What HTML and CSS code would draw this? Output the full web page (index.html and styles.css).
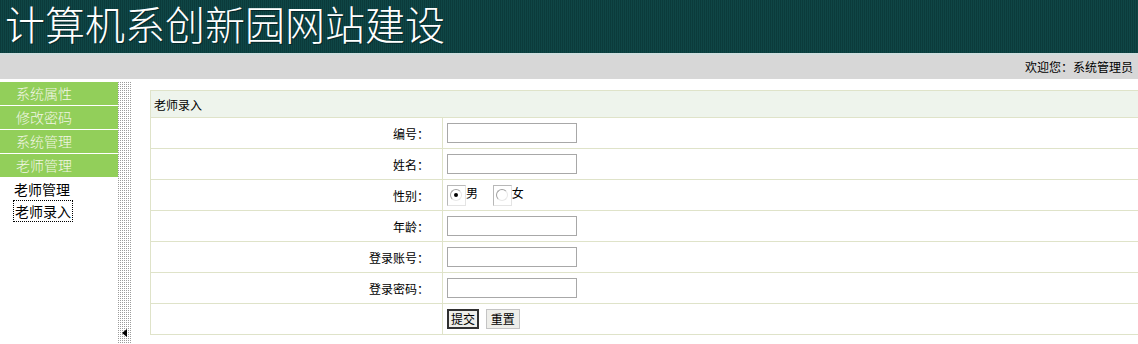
FILE: index.html
```html
<!DOCTYPE html>
<html lang="zh-CN">
<head>
    <meta charset="UTF-8">
    <title>计算机系创新园网站建设</title>
    <link rel="stylesheet" href="styles.css">
</head>
<body>
    <!-- 顶部标题 -->
    <div class="header"><span class="title">计算机系创新园网站建设</span></div>
    <div class="topbar">欢迎您：系统管理员</div>

    <div class="main">
        <!-- 左侧菜单 -->
        <div class="sidebar">
            <div class="menu-item">系统属性</div>
            <div class="menu-item">修改密码</div>
            <div class="menu-item">系统管理</div>
            <div class="menu-item">老师管理</div>
            <div class="sub-item">老师管理</div>
            <div class="sub-item"><span class="focused">老师录入</span></div>
        </div>
        <div class="divider"><span class="arrow"></span></div>

        <!-- 老师录入表单 -->
        <div class="content">
            <table class="form-table">
                <tr>
                    <td class="caption" colspan="2">老师录入</td>
                </tr>
                <tr>
                    <td class="label">编号：</td>
                    <td class="field"><input type="text" class="text-input"></td>
                </tr>
                <tr>
                    <td class="label">姓名：</td>
                    <td class="field"><input type="text" class="text-input"></td>
                </tr>
                <tr>
                    <td class="label">性别：</td>
                    <td class="field">
                        <span class="radio-box"><input type="radio" name="sex" class="radio" checked></span>男
                        <span class="radio-box second"><input type="radio" name="sex" class="radio"></span>女
                    </td>
                </tr>
                <tr>
                    <td class="label">年龄：</td>
                    <td class="field"><input type="text" class="text-input"></td>
                </tr>
                <tr>
                    <td class="label">登录账号：</td>
                    <td class="field"><input type="text" class="text-input"></td>
                </tr>
                <tr>
                    <td class="label">登录密码：</td>
                    <td class="field"><input type="password" class="text-input"></td>
                </tr>
                <tr>
                    <td class="label"></td>
                    <td class="field">
                        <button class="btn btn-default">提交</button>
                        <button class="btn">重置</button>
                    </td>
                </tr>
            </table>
        </div>
    </div>
</body>
</html>
```

FILE: styles.css
```css
body {
    margin: 0;
    font-family: "Noto Sans CJK SC", "DejaVu Sans", sans-serif;
    font-size: 12px;
    color: #000;
    background: #fff;
    overflow: hidden;
}
.header {
    height: 53px;
    padding-left: 5px;
    background-color: #0d4242;
    background-image: repeating-linear-gradient(90deg, #0b3b3b 0, #0b3b3b 1px, #0f4646 1px, #0f4646 2px);
    border-bottom: 2px solid #cfdcdc;
}
.title {
    display: inline-block;
    height: 53px;
    line-height: 46px;
    font-size: 40px;
    font-weight: 300;
    color: #fff;
    text-shadow: 1px 1px 0 #06282a;
}
.topbar {
    height: 24px;
    line-height: 24px;
    text-align: right;
    padding-right: 5px;
    background: #d7d7d7;
}
.main {
    display: flex;
    margin-top: 3px;
    height: 262px;
}
.sidebar {
    flex: none;
    width: 118px;
}
.menu-item {
    height: 23px;
    line-height: 23px;
    margin-bottom: 1px;
    padding-left: 16px;
    font-size: 14px;
    font-weight: 300;
    color: #f3f6e6;
    background: #92cf5a;
}
.sub-item {
    height: 22px;
    line-height: 22px;
    padding-left: 14px;
    font-size: 14px;
}
.focused {
    padding: 0 1px;
    outline: 1px dotted #000;
}
.divider {
    flex: none;
    position: relative;
    width: 13px;
    background:
        linear-gradient(90deg, rgba(255,255,255,0) 1px, #fff 1px) 0 0 / 2px 2px,
        linear-gradient(rgba(255,255,255,0) 1px, #fff 1px) 0 0 / 2px 2px,
        #9c9c9c;
}
.arrow {
    position: absolute;
    left: 4px;
    top: 247px;
    width: 0;
    height: 0;
    border-top: 4px solid transparent;
    border-bottom: 4px solid transparent;
    border-right: 5px solid #000;
}
.content {
    flex: none;
    padding: 8px 0 0 19px;
}
.form-table {
    width: 1000px;
    border-collapse: collapse;
}
.form-table td {
    border: 1px solid #dfe3c9;
    padding: 0;
}
.caption {
    height: 26px;
    padding-left: 3px !important;
    background: #eef4ec;
}
.label {
    width: 278px;
    height: 30px;
    text-align: right;
    padding-right: 13px !important;
}
.field {
    padding-left: 4px !important;
}
.text-input {
    display: block;
    width: 130px;
    height: 20px;
    margin: 0;
    padding: 0 2px;
    box-sizing: border-box;
    border: 1px solid #a8a8a8;
    font-size: 12px;
}
.radio-box {
    display: inline-block;
    vertical-align: middle;
    width: 19px;
    height: 21px;
    box-sizing: border-box;
    border: 1px solid #b8b8b8;
    border-right-color: #e4e4e4;
    border-bottom-color: #e4e4e4;
    position: relative;
}
.radio-box.second {
    margin-left: 12px;
}
.radio {
    appearance: none;
    -webkit-appearance: none;
    position: absolute;
    left: 2px;
    top: 3px;
    width: 12px;
    height: 12px;
    margin: 0;
    border-radius: 50%;
    border: 1px solid #a0a0a0;
    border-right-color: #e8e8e8;
    border-bottom-color: #e8e8e8;
    background: #fff;
    box-sizing: border-box;
}
.radio:checked::after {
    content: "";
    position: absolute;
    left: 3px;
    top: 3px;
    width: 4px;
    height: 4px;
    border-radius: 50%;
    background: #000;
}
.btn {
    height: 20px;
    padding: 0 4px;
    margin: 0 4px 0 0;
    font-family: "Noto Sans CJK SC", sans-serif;
    font-size: 12px;
    line-height: 16px;
    color: #000;
    background: #eeeeea;
    border: 1px solid #c4c4c4;
    vertical-align: middle;
}
.btn-default {
    border: 2px solid #303030;
    padding: 0 2px;
}
```
